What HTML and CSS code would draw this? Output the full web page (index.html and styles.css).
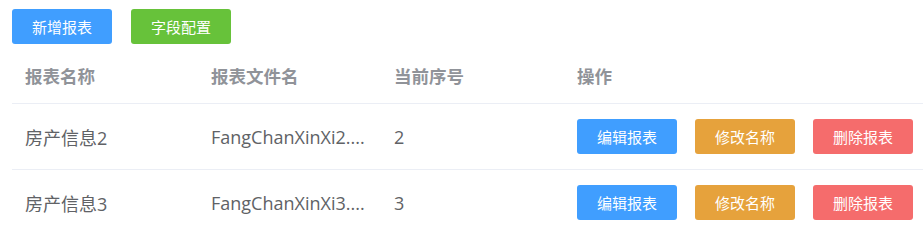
FILE: index.html
```html
<!DOCTYPE html>
<html>
<head>
<meta charset="utf-8">
<link rel="stylesheet" href="styles.css">
</head>
<body>
<div class="page">
  <div class="toolbar">
    <button class="btn btn-blue">新增报表</button>
    <button class="btn btn-green">字段配置</button>
  </div>
  <div class="table">
    <div class="row head">
      <div class="cell">报表名称</div>
      <div class="cell">报表文件名</div>
      <div class="cell">当前序号</div>
      <div class="cell">操作</div>
    </div>
    <div class="row">
      <div class="cell">房产信息2</div>
      <div class="cell">FangChanXinXi2....</div>
      <div class="cell">2</div>
      <div class="cell ops">
        <button class="btn btn-blue">编辑报表</button>
        <button class="btn btn-orange">修改名称</button>
        <button class="btn btn-red">删除报表</button>
      </div>
    </div>
    <div class="row">
      <div class="cell">房产信息3</div>
      <div class="cell">FangChanXinXi3....</div>
      <div class="cell">3</div>
      <div class="cell ops">
        <button class="btn btn-blue">编辑报表</button>
        <button class="btn btn-orange">修改名称</button>
        <button class="btn btn-red">删除报表</button>
      </div>
    </div>
  </div>
</div>
</body>
</html>
```
FILE: styles.css
```css
* { box-sizing: border-box; }
html, body { margin: 0; padding: 0; background: #fff; }
body {
  font-family: "Open Sans", "Noto Sans CJK SC", sans-serif;
  color: #606266;
  overflow: hidden;
}
.page { padding: 9px 0 0 12px; }
.toolbar { display: flex; gap: 19px; height: 35px; }
.btn {
  width: 100px;
  height: 35px;
  border: none;
  border-radius: 3px;
  color: #fff;
  font-family: "Noto Sans CJK SC", sans-serif;
  font-size: 15px;
  padding: 0;
  display: flex;
  align-items: center;
  justify-content: center;
}
.btn-blue { background: #409eff; }
.btn-green { background: #67c23a; }
.btn-orange { background: #e6a23c; }
.btn-red { background: #f56c6c; }
.table { margin-top: 3px; }
.row {
  display: grid;
  grid-template-columns: 186px 183px 183px 1fr;
  height: 66px;
  border-bottom: 1px solid #ebeef5;
  align-items: center;
  font-size: 18px;
}
.row.head {
  height: 57px;
  font-weight: bold;
  color: #909399;
  font-family: "Noto Sans CJK SC", sans-serif;
  font-size: 17.5px;
}
.cell { padding-left: 13px; white-space: nowrap; }
.ops { display: flex; gap: 18px; }
```
